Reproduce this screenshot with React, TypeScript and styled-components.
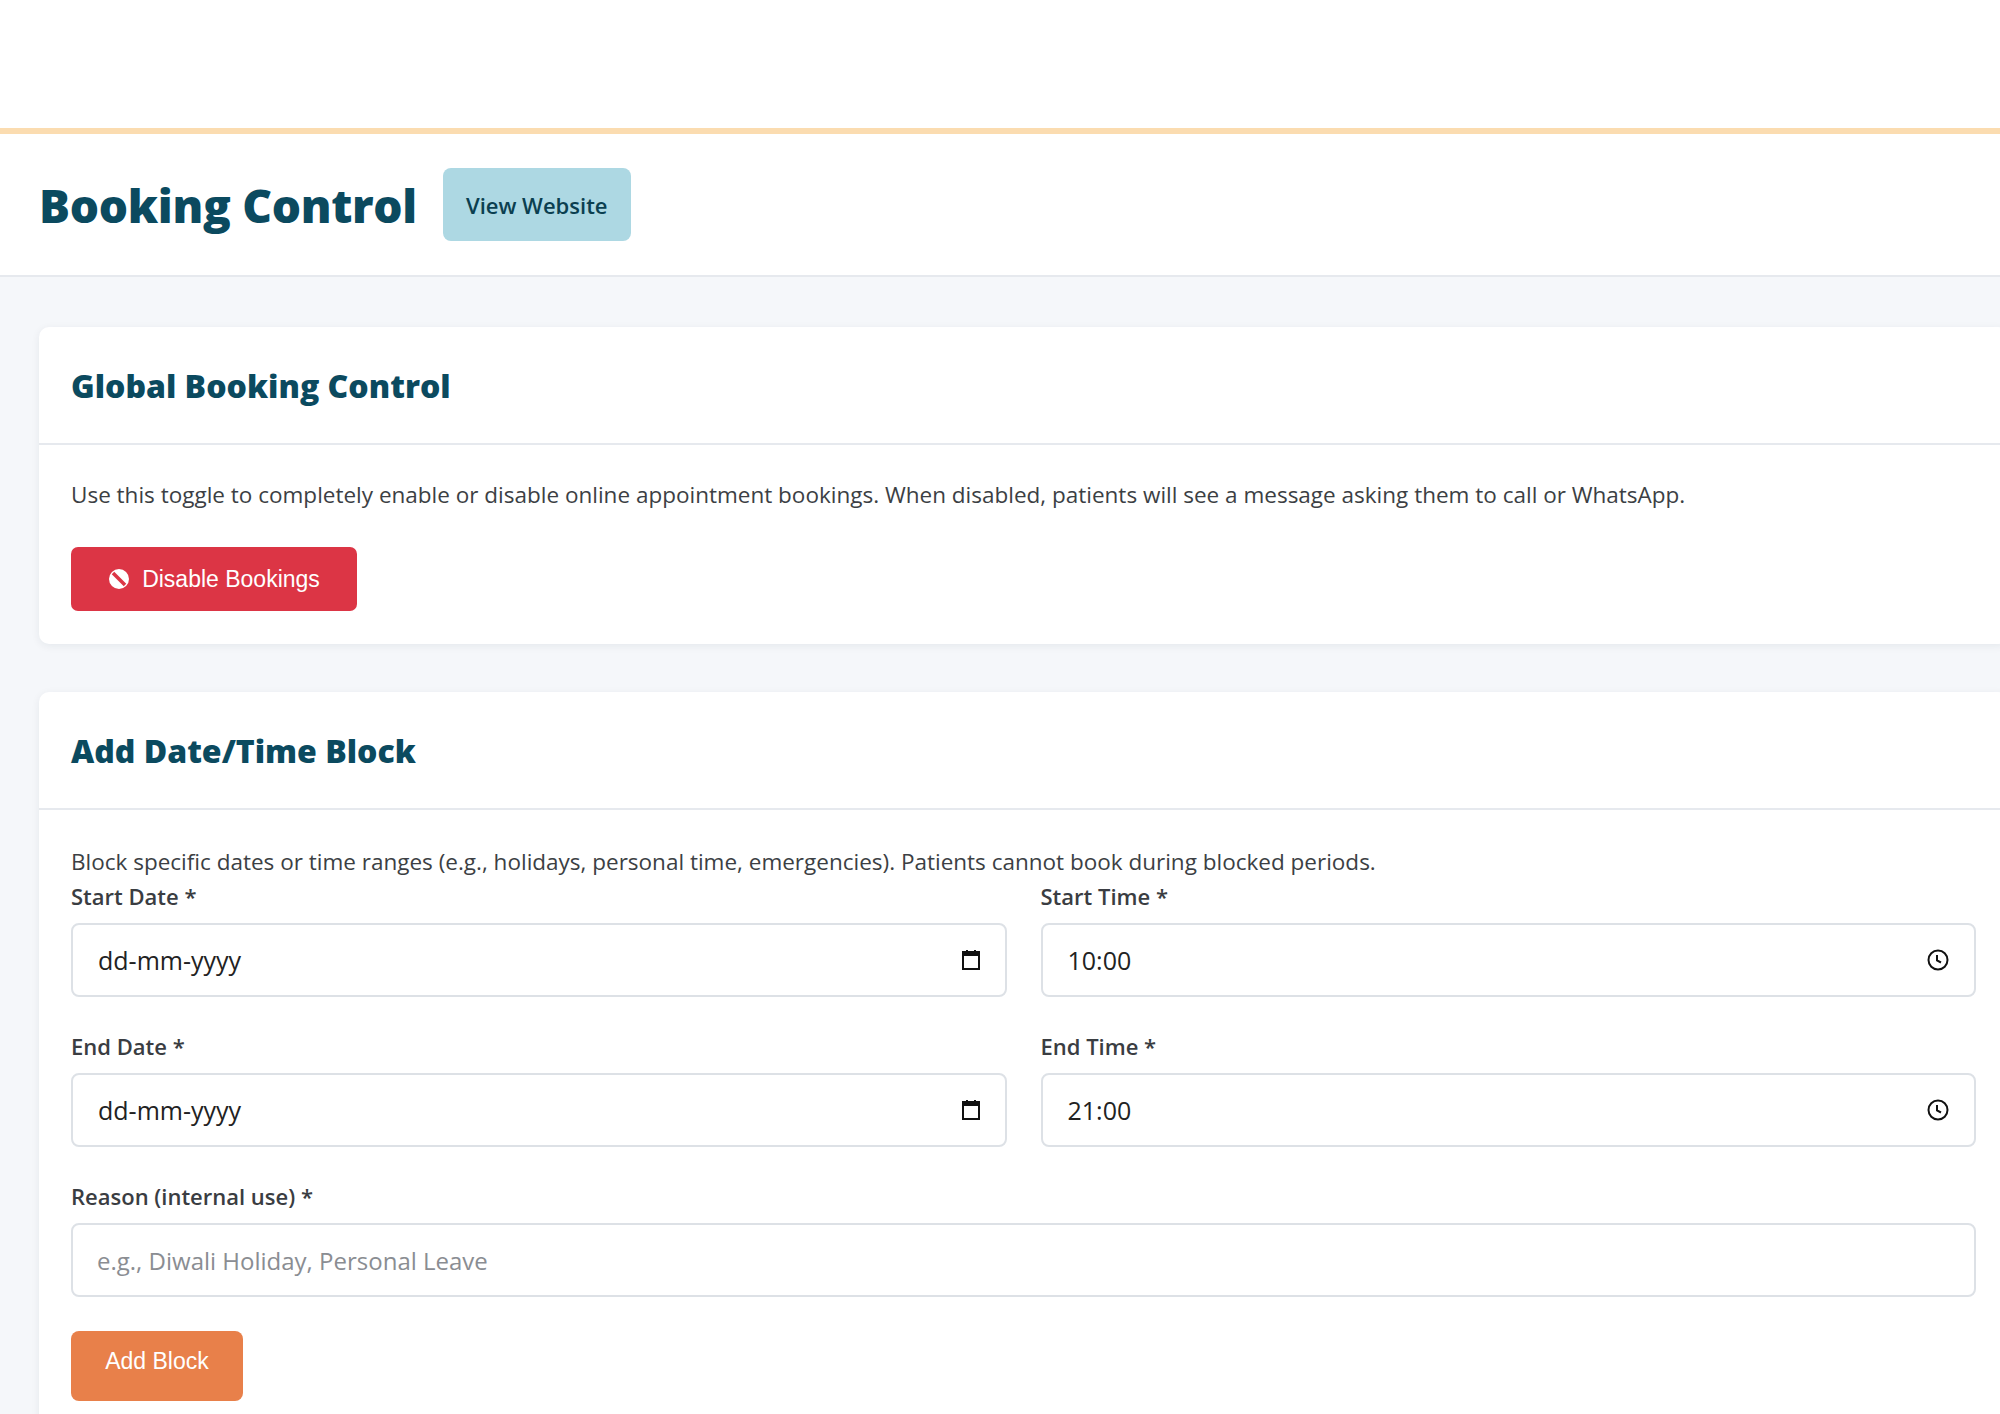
import React from "react";
import styled, { createGlobalStyle } from "styled-components";

const Global = createGlobalStyle`
  html, body { margin: 0; padding: 0; }
  body {
    background: #f5f7fa;
    font-family: "Open Sans", "DejaVu Sans", sans-serif;
    overflow: hidden;
    width: 2000px;
    height: 1414px;
  }
`;

const TopBar = styled.div`
  height: 128px;
  background: #fff;
  border-bottom: 6px solid #fbdcb0;
`;

const Header = styled.header`
  height: 141px;
  background: #fff;
  border-bottom: 2px solid #e6e9ee;
  display: flex;
  align-items: center;
  gap: 26px;
  padding-left: 39px;
`;

const PageTitle = styled.h1`
  margin: 0;
  font-size: 46px;
  font-weight: 800;
  color: #0b4a5f;
  letter-spacing: -0.3px;
`;

const LinkButton = styled.button`
  height: 73px;
  padding: 0 23px;
  border: none;
  border-radius: 8px;
  background: #add8e3;
  color: #0b3f50;
  font-family: inherit;
  font-size: 22px;
  font-weight: 600;
`;

const Main = styled.main`
  padding: 50px 0 0 39px;
  display: flex;
  flex-direction: column;
  gap: 48px;
`;

const Card = styled.section`
  width: 1969px;
  background: #fff;
  border-radius: 10px;
  box-shadow: 0 2px 8px rgba(20, 40, 60, 0.07);
`;

const CardHead = styled.div`
  height: 116px;
  display: flex;
  align-items: center;
  padding-left: 32px;
  border-bottom: 2px solid #e6e9ee;
`;

const CardTitle = styled.h2`
  margin: 0;
  font-size: 32px;
  font-weight: 800;
  color: #0b4a5f;
`;

const CardBody = styled.div<{ $top: number }>`
  padding: ${(p) => p.$top}px 32px 33px 32px;
`;

const Desc = styled.p<{ $mb: number }>`
  margin: 0 0 ${(p) => p.$mb}px;
  font-size: 22.5px;
  color: #3c3f44;
  line-height: 34px;
`;

const DangerButton = styled.button`
  height: 64px;
  width: 286px;
  border: none;
  border-radius: 7px;
  background: #dc3545;
  color: #fff;
  font-family: "Liberation Sans", Arial, sans-serif;
  font-size: 23px;
  display: flex;
  align-items: center;
  justify-content: center;
  gap: 12px;
`;

const Grid = styled.div`
  display: grid;
  grid-template-columns: 1fr 1fr;
  column-gap: 34px;
  row-gap: 34px;
  margin-right: 0;
  width: 1905px;
`;

const Field = styled.div<{ $full?: boolean }>`
  display: flex;
  flex-direction: column;
  gap: 12px;
  grid-column: ${(p) => (p.$full ? "1 / 3" : "auto")};
`;

const Label = styled.label`
  font-size: 22px;
  font-weight: 600;
  color: #3a3d42;
`;

const FakeInput = styled.div`
  height: 74px;
  box-sizing: border-box;
  border: 2px solid #dde1e6;
  border-radius: 8px;
  display: flex;
  align-items: center;
  justify-content: space-between;
  padding: 0 24px 0 25px;
  font-size: 25px;
  color: #222;
`;

const TextInput = styled.input`
  height: 74px;
  box-sizing: border-box;
  border: 2px solid #dde1e6;
  border-radius: 8px;
  padding: 0 24px;
  font-family: inherit;
  font-size: 24px;
  color: #222;
  &::placeholder { color: #8a8d92; }
`;

const AccentButton = styled.button`
  margin-top: 34px;
  height: 70px;
  width: 172px;
  border: none;
  border-radius: 8px;
  background: #e8804a;
  color: #fff;
  font-family: "Liberation Sans", Arial, sans-serif;
  font-size: 23px;
  padding-bottom: 10px;
`;

const BanIcon = () => (
  <svg width="22" height="22" viewBox="0 0 22 22">
    <circle cx="11" cy="11" r="10" fill="#fff" />
    <line x1="5" y1="5" x2="17" y2="17" stroke="#dc3545" strokeWidth="3.5" />
  </svg>
);

const CalendarIcon = () => (
  <svg width="20" height="22" viewBox="0 0 20 22">
    <rect x="2" y="3" width="16" height="17" fill="none" stroke="#111" strokeWidth="2" />
    <rect x="2" y="3" width="16" height="4" fill="#111" />
    <rect x="5" y="1" width="2" height="3" fill="#111" />
    <rect x="13" y="1" width="2" height="3" fill="#111" />
  </svg>
);

const ClockIcon = () => (
  <svg width="24" height="24" viewBox="0 0 24 24">
    <circle cx="12" cy="12" r="9.5" fill="none" stroke="#111" strokeWidth="2" />
    <path d="M11 7v5.5l4 2" fill="none" stroke="#111" strokeWidth="2" />
  </svg>
);

export default function App() {
  return (
    <>
      <Global />
      <TopBar />
      <Header>
        <PageTitle>Booking Control</PageTitle>
        <LinkButton>View Website</LinkButton>
      </Header>
      <Main>
        <Card>
          <CardHead>
            <CardTitle>Global Booking Control</CardTitle>
          </CardHead>
          <CardBody $top={33}>
            <Desc $mb={35}>
              Use this toggle to completely enable or disable online appointment bookings. When
              disabled, patients will see a message asking them to call or WhatsApp.
            </Desc>
            <DangerButton>
              <BanIcon />
              Disable Bookings
            </DangerButton>
          </CardBody>
        </Card>
        <Card>
          <CardHead>
            <CardTitle>Add Date/Time Block</CardTitle>
          </CardHead>
          <CardBody $top={35}>
            <Desc $mb={2}>
              Block specific dates or time ranges (e.g., holidays, personal time, emergencies).
              Patients cannot book during blocked periods.
            </Desc>
            <Grid>
              <Field>
                <Label>Start Date *</Label>
                <FakeInput>
                  dd-mm-yyyy
                  <CalendarIcon />
                </FakeInput>
              </Field>
              <Field>
                <Label>Start Time *</Label>
                <FakeInput>
                  10:00
                  <ClockIcon />
                </FakeInput>
              </Field>
              <Field>
                <Label>End Date *</Label>
                <FakeInput>
                  dd-mm-yyyy
                  <CalendarIcon />
                </FakeInput>
              </Field>
              <Field>
                <Label>End Time *</Label>
                <FakeInput>
                  21:00
                  <ClockIcon />
                </FakeInput>
              </Field>
              <Field $full>
                <Label>Reason (internal use) *</Label>
                <TextInput placeholder="e.g., Diwali Holiday, Personal Leave" />
              </Field>
            </Grid>
            <AccentButton>Add Block</AccentButton>
          </CardBody>
        </Card>
      </Main>
    </>
  );
}
